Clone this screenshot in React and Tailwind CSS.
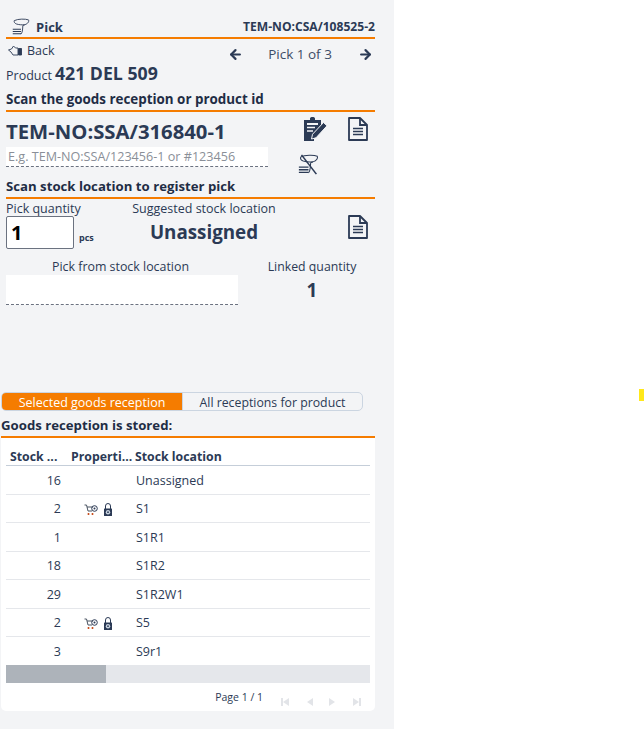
import { ArrowLeft, ArrowRight } from 'lucide-react';

const rows = [
  { qty: 16, loc: 'Unassigned' },
  { qty: 2, loc: 'S1', flags: true },
  { qty: 1, loc: 'S1R1' },
  { qty: 18, loc: 'S1R2' },
  { qty: 29, loc: 'S1R2W1' },
  { qty: 2, loc: 'S5', flags: true },
  { qty: 3, loc: 'S9r1' },
];

function Scanner({ className, crossed }) {
  return (
    <svg viewBox="0 0 24 24" className={className} fill="none" stroke="#2b3a55" strokeWidth="1.200">
      <path d="M3 3.500C8 1 18 1 22 2.500c1 2-.5 5-5 6.500l-2.500 1-.5 6c-.2 2-.8 4-2 5.500" />
      <path d="M3 3.500c-.5 2 .5 3.500 3 4.500 3 1 7 1.300 11 1" />
      <path d="M1 15h11M1 18h11M1 21h11" strokeWidth="1.600" />
      {crossed && <path d="M4 1l17 22" strokeWidth="1.800" />}
    </svg>
  );
}

function DocIcon() {
  return (
    <svg viewBox="0 0 22 24" className="w-[22px] h-[24px]" fill="none" stroke="#2b3a55" strokeWidth="1.800">
      <path d="M2 1h11l7 7v15H2z" strokeLinejoin="round" />
      <path d="M13 1v7h7" />
      <path d="M6 11.500h10M6 14.500h10M6 17.500h10" strokeWidth="1.600" />
    </svg>
  );
}

function ClipboardPen() {
  return (
    <svg viewBox="0 0 25 24" className="w-[25px] h-[24px]">
      <path d="M1 3h6V1.500C7 .5 8 0 9.500 0S12 .5 12 1.500V3h6v9l-7 7.500V24H1z" fill="#2b3a55" />
      <path d="M4 6h11v2H4z" fill="#f3f4f6" />
      <path d="M4 10.500h8M4 14h6" stroke="#f3f4f6" strokeWidth="1.500" />
      <path d="M20.500 5.500l3.500 3.300-11 12-4.500 1.200 1-4.700z" fill="#2b3a55" stroke="#f3f4f6" strokeWidth="1" />
    </svg>
  );
}

function HandIcon() {
  return (
    <svg viewBox="0 0 14 12" className="w-[14px] h-[12px]" fill="none" stroke="#2b3a55" strokeWidth=".9">
      <path d="M.5 5l3-1 2-3 2 2h2.500v7H5L3 7z" />
      <path d="M10.500 3.500h3V10h-3z" fill="#2b3a55" />
    </svg>
  );
}

function CartIcon() {
  return (
    <svg viewBox="0 0 14 12" className="w-[14px] h-[12px]" fill="none" stroke="#4b5563" strokeWidth="1">
      <path d="M.5 1h2l1.500 6h4" />
      <path d="M3 3h6" />
      <circle cx="4.500" cy="10" r="1" fill="#c2410c" stroke="none" />
      <circle cx="8.500" cy="10" r="1" fill="#c2410c" stroke="none" />
      <circle cx="10.500" cy="4.500" r="2.800" stroke="#2b3a55" />
      <circle cx="10.500" cy="4.500" r="1" fill="#2b3a55" stroke="none" />
    </svg>
  );
}

function LockIcon() {
  return (
    <svg viewBox="0 0 10 13" className="w-[10px] h-[13px]">
      <path d="M2.500 6V3a2.500 2.500 0 0 1 5 0v3" fill="none" stroke="#2b3a55" strokeWidth="1" />
      <rect x="1" y="5.500" width="8" height="7.500" rx=".5" fill="#2b3a55" />
      <circle cx="5" cy="9.200" r="2.200" fill="#cbd5e1" />
      <circle cx="5" cy="9.200" r=".9" fill="#2b3a55" />
    </svg>
  );
}

function PagerIcon({ dir, bar }) {
  return (
    <svg viewBox="0 0 10 10" className="w-[10px] h-[10px]" fill="#e2e4e8">
      {dir === 'left' ? <path d="M9 1v8L3 5z" /> : <path d="M1 1v8l6-4z" />}
      {bar && (dir === 'left' ? <path d="M1 1h2v8H1z" /> : <path d="M7 1h2v8H7z" />)}
    </svg>
  );
}

export default function App() {
  return (
    <div className="relative w-[644px] h-[729px] bg-white font-['Open_Sans','Noto_Sans',sans-serif] text-[#2b3a55] overflow-hidden">
      <div className="w-[394px] h-[729px] bg-[#f3f4f6] flex flex-col">
        <div className="mx-[6px] w-[369px] h-[39px] flex items-end justify-between border-b-2 border-[#f57c00] pb-[1px]">
          <div className="flex items-center gap-[6px] pl-[6px]">
            <Scanner className="w-[18px] h-[18px]" />
            <span className="text-[13px] font-bold leading-[18px]">Pick</span>
          </div>
          <span className="text-[12.100px] font-bold leading-[18px]">TEM-NO:CSA/108525-2</span>
        </div>

        <div className="mx-[6px] w-[369px] h-[51px] flex justify-between">
          <div className="flex flex-col">
            <div className="flex items-center gap-[5px] pl-[2px] h-[22px] pt-[2px] text-[12.500px]">
              <HandIcon />
              <span>Back</span>
            </div>
            <div className="flex items-baseline gap-[3px] leading-[25px]">
              <span className="text-[12.500px]">Product</span>
              <span className="text-[17.700px] font-bold">421 DEL 509</span>
            </div>
          </div>
          <div className="w-[145px] h-[30px] mr-[2.500px] ml-auto flex items-center justify-between">
            <ArrowLeft className="w-[15px] h-[15px]" strokeWidth={3.500} />
            <span className="text-[13.500px] text-[#3d4c66]">Pick 1 of 3</span>
            <ArrowRight className="w-[15px] h-[15px]" strokeWidth={3.500} />
          </div>
        </div>

        <div className="mx-[6px] w-[369px] border-b-2 border-[#f57c00] h-[22px]">
          <div className="text-[13.400px] leading-[18px] font-bold text-[#1f2d45] whitespace-nowrap">Scan the goods reception or product id</div>
        </div>

        <div className="mx-[6px] w-[369px] h-[65px] flex">
          <div className="w-[262px] shrink-0 flex flex-col">
            <div className="text-[20.300px] leading-[27px] font-bold mt-[6px] whitespace-nowrap">TEM-NO:SSA/316840-1</div>
            <div className="mt-[2px] h-[20px] bg-white border-b border-dashed border-[#6b7280] text-[12.600px] leading-[19px] text-[#8a8f98] pl-[2px] whitespace-nowrap">
              E.g. TEM-NO:SSA/123456-1 or #123456
            </div>
          </div>
          <div className="flex-1 flex flex-col">
            <div className="flex mt-[5px] pl-[35px] gap-[19px]">
              <ClipboardPen />
              <DocIcon />
            </div>
            <div className="pl-[30px] mt-[13px]">
              <Scanner className="w-[21px] h-[21px]" crossed />
            </div>
          </div>
        </div>

        <div className="mx-[6px] w-[369px] border-b-2 border-[#f57c00] h-[22px]">
          <div className="text-[13.200px] leading-[18px] font-bold text-[#1f2d45] whitespace-nowrap">Scan stock location to register pick</div>
        </div>

        <div className="mx-[6px] w-[369px] h-[52px] flex">
          <div className="w-[110px] shrink-0">
            <div className="h-[17px] pt-[1px] text-[12.500px] leading-[17px]">Pick quantity</div>
            <div className="flex items-end gap-[5px]">
              <div className="w-[68px] h-[33px] bg-white border border-[#6b7280] rounded-[2px] pl-[4px] text-[20px] leading-[31px] font-bold text-black">1</div>
              <span className="text-[9px] font-bold leading-[14px] pb-[4px]">pcs</span>
            </div>
          </div>
          <div className="w-[168px] shrink-0 ml-[4px] text-center">
            <div className="h-[17px] pt-[1px] text-[12.500px] leading-[17px] whitespace-nowrap">Suggested stock location</div>
            <div className="text-[18.800px] font-bold leading-[27px] mt-[3px]">Unassigned</div>
          </div>
          <div className="pl-[59px] pt-[16px]">
            <DocIcon />
          </div>
        </div>

        <div className="mx-[6px] w-[369px] h-[134px] flex">
          <div className="w-[232px] shrink-0">
            <div className="text-[12.400px] leading-[17px] mt-[7px] text-center pr-[3px]">Pick from stock location</div>
            <div className="h-[30px] bg-white border-b border-dashed border-[#6b7280]" />
          </div>
          <div className="w-[137px] shrink-0 pl-[11px] text-center">
            <div className="text-[12.300px] leading-[17px] mt-[7px] whitespace-nowrap">Linked quantity</div>
            <div className="text-[19px] font-bold leading-[24px] mt-[3px]">1</div>
          </div>
        </div>

        <div className="ml-[1px] mt-[7px] w-[362px] h-[19px] flex text-[12.500px] leading-[19px] rounded-[5px] border border-[#cbd5e1] overflow-hidden">
          <div className="w-[181px] bg-[#f57c00] text-white text-center border-r border-[#cbd5e1]">Selected goods reception</div>
          <div className="flex-1 text-center text-[12.300px]">All receptions for product</div>
        </div>

        <div className="ml-[1px] mt-[5px] w-[374px] h-[22px] border-b-2 border-[#f57c00]">
          <div className="text-[13.200px] leading-[18px] font-bold text-[#1f2d45] whitespace-nowrap">Goods reception is stored:</div>
        </div>

        <div className="ml-[1px] w-[374px] h-[273px] bg-white rounded-b-[5px] px-[5px]">
          <div className="flex h-[28px] items-end border-b border-[#c5ced9] text-[12.300px] font-bold leading-[17px]">
            <div className="w-[65px] pl-[4px]">Stock ...</div>
            <div className="w-[64px]">Properti...</div>
            <div>Stock location</div>
          </div>
          {rows.map((r, i) => (
            <div key={r.loc} className={`flex items-center text-[12.500px] pt-[3px] ${i < rows.length - 1 ? 'h-[28.500px] border-b border-[#e5e7eb]' : 'h-[28px]'}`}>
              <div className="w-[55px] text-right">{r.qty}</div>
              <div className="w-[75px] pl-[23px] flex items-center gap-[5px]">
                {r.flags && (
                  <>
                    <CartIcon />
                    <LockIcon />
                  </>
                )}
              </div>
              <div>{r.loc}</div>
            </div>
          ))}
          <div className="h-[18px] bg-[#e5e7eb]">
            <div className="w-[100px] h-[18px] bg-[#adb3ba]" />
          </div>
          <div className="flex h-[28px] items-center justify-end">
            <span className="text-[10.500px] mr-[17px] mt-[1px]">Page 1 / 1</span>
            <div className="flex gap-[14px] mt-[10px] pr-[8px]">
              <PagerIcon dir="left" bar />
              <PagerIcon dir="left" />
              <PagerIcon dir="right" />
              <PagerIcon dir="right" bar />
            </div>
          </div>
        </div>
      </div>
      <div className="absolute left-[639px] top-[389px] w-[5px] h-[12px] bg-[#ffe81a]" />
    </div>
  );
}
